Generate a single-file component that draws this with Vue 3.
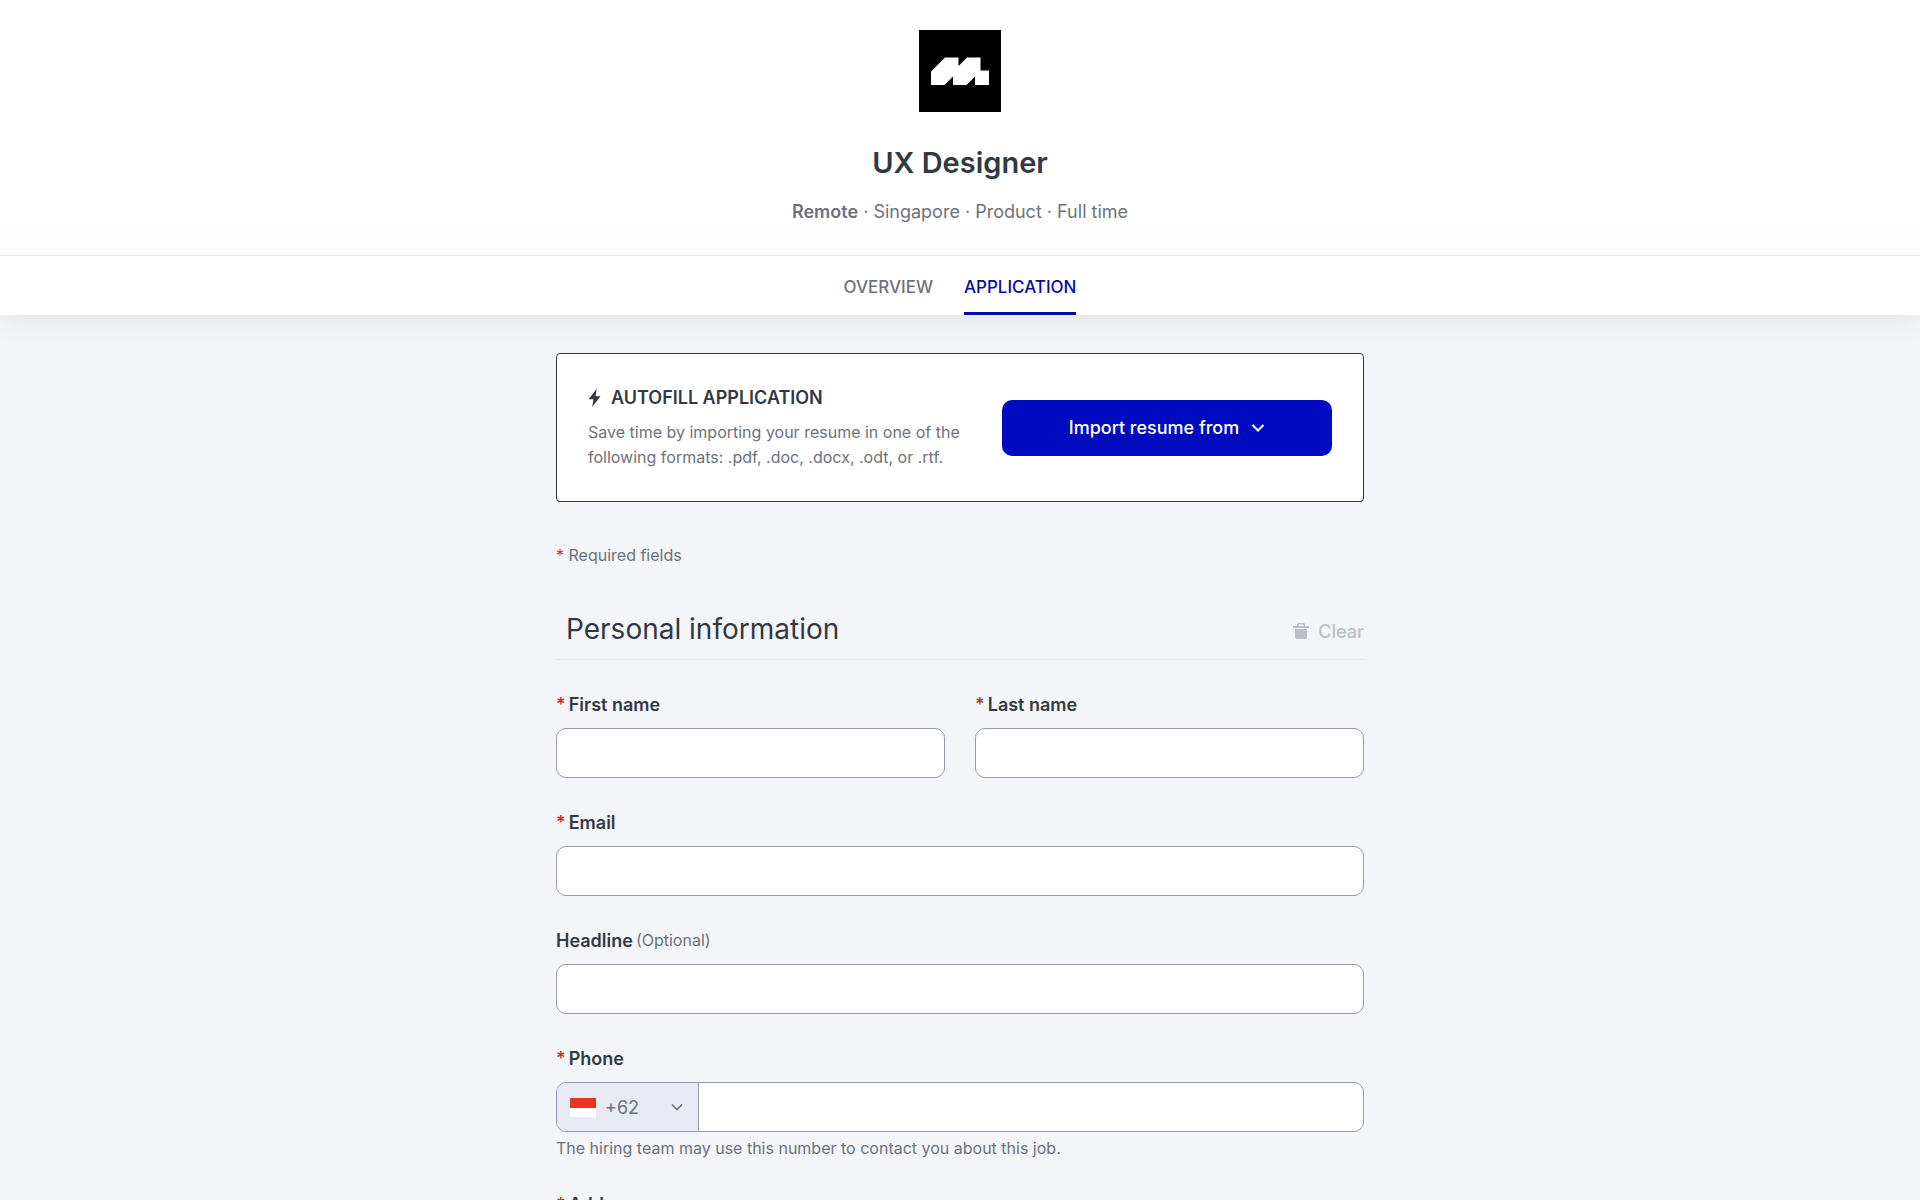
<template>
	<div class="page">
		<header class="header">
			<a class="header__logo" href="#" aria-label="Company page">
				<svg width="82" height="82" viewBox="0 0 82 82">
					<rect width="82" height="82" />
					<path fill="#fff" d="M12 41.500 26 27.500h13.500v8.500l8.500-8.500h13.500v13H70v14.500H56v-8.500L47.500 55H34v-8.500L25.500 55H12z" />
				</svg>
			</a>
			<h1 class="header__title">UX Designer</h1>
			<p class="header__meta"><strong>Remote</strong> · Singapore · Product · Full time</p>
		</header>

		<nav class="tabs">
			<a v-for="tab in tabs" :key="tab.key" class="tabs__item" :class="{ active: tab.key === activeTab }" :href="'#' + tab.key" @click.prevent="activeTab = tab.key">
				{{ tab.label }}
			</a>
		</nav>

		<main class="content">
			<section class="autofill">
				<div class="autofill__text">
					<h2 class="autofill__title">
						<svg width="14" height="18" viewBox="0 0 14 18">
							<path fill="currentColor" d="M8.600 0 .5 10.200h5L4.200 18 12.500 7.200H7.600z" />
						</svg>
						AUTOFILL APPLICATION
					</h2>
					<p>Save time by importing your resume in one of the following formats: .pdf, .doc, .docx, .odt, or .rtf.</p>
				</div>
				<button type="button" class="autofill__button">
					Import resume from
					<svg width="14" height="14" viewBox="0 0 14 14">
						<path fill="none" stroke="currentColor" stroke-width="2" d="M1.500 4 7 9.500 12.500 4" />
					</svg>
				</button>
			</section>

			<p class="required"><span class="star">*</span> Required fields</p>

			<form @submit.prevent>
				<div class="section-head">
					<h2 class="section-head__title">Personal information</h2>
					<button type="button" class="section-head__clear" :disabled="isEmpty" @click="clearForm">
						<svg width="16" height="16" viewBox="0 0 16 16">
							<path fill="currentColor" d="M4 3V1.500Q4 0 5.500 0h5Q12 0 12 1.500V3h4v2H0V3zm1.500 0h5V1.500h-5zM2 6h12v8q0 2-2 2H4q-2 0-2-2z" />
						</svg>
						<span>Clear</span>
					</button>
				</div>

				<div class="fields">
					<div v-for="field in fields" :key="field.key" class="field" :class="{ half: field.half }">
						<label class="field__label" :for="field.key">
							<span v-if="!field.optional" class="star">*</span>
							<span>{{ field.label }}</span>
							<span v-if="field.optional" class="field__optional">(Optional)</span>
						</label>
						<div v-if="field.key === 'phone'" class="phone">
							<div class="phone__country">
								<svg class="phone__flag" width="26" height="19" viewBox="0 0 26 19">
									<path fill="#fff" d="M0 0h26v19H0z" />
									<path fill="#e93323" d="M0 0h26v10H0z" />
								</svg>
								<select v-model="country" class="phone__select" aria-label="Country code">
									<option value="+62">+62</option>
									<option value="+65">+65</option>
								</select>
								<svg class="phone__arrow" width="14" height="14" viewBox="0 0 14 14">
									<path fill="none" stroke="currentColor" stroke-width="1.600" d="M2 4.500l5 5 5-5" />
								</svg>
							</div>
							<input :id="field.key" v-model="form.phone" class="phone__input" type="tel" />
						</div>
						<input v-else :id="field.key" v-model="form[field.key]" class="field__input" :type="field.type || 'text'" />
						<p v-if="field.hint" class="field__hint">{{ field.hint }}</p>
					</div>
				</div>
			</form>
		</main>
	</div>
</template>

<script setup>
	import { ref, reactive, computed } from "vue";

	const tabs = [
		{ key: "overview", label: "OVERVIEW" },
		{ key: "application", label: "APPLICATION" },
	];

	const fields = [
		{ key: "firstName", label: "First name", half: true },
		{ key: "lastName", label: "Last name", half: true },
		{ key: "email", label: "Email", type: "email" },
		{ key: "headline", label: "Headline", optional: true },
		{ key: "phone", label: "Phone", hint: "The hiring team may use this number to contact you about this job." },
		{ key: "address", label: "Address" },
	];

	const activeTab = ref("application");
	const country = ref("+62");
	const form = reactive({ firstName: "", lastName: "", email: "", headline: "", phone: "", address: "" });

	const isEmpty = computed(() => Object.values(form).every((v) => !v));

	function clearForm() {
		Object.keys(form).forEach((key) => (form[key] = ""));
	}
</script>

<style>
	body {
		margin: 0;
		background: #f3f5f9;
	}
</style>

<style scoped>
	.page {
		font-family: Inter, "Liberation Sans", sans-serif;
		font-size: 16px;
		line-height: 25px;
		color: #333942;
	}

	.page * {
		box-sizing: border-box;
	}

	h1,
	h2,
	p {
		margin: 0;
	}

	button,
	input,
	select {
		font: inherit;
	}

	.header {
		position: relative;
		z-index: 1;
		display: flex;
		flex-direction: column;
		align-items: center;
		padding: 30px 24px 31px;
		background: linear-gradient(#fff 85%, #fcfcfc);
		border-bottom: 1px solid #e6e8e8;
	}

	.header__logo,
	.header__logo svg {
		display: block;
	}

	.header__title {
		margin-top: 31px;
		font-size: 29px;
		line-height: 40px;
		font-weight: 600;
	}

	.header__meta {
		margin-top: 16px;
		font-size: 18px;
		color: #6d727c;
	}

	.header__meta strong {
		font-weight: 600;
	}

	.tabs {
		display: flex;
		justify-content: center;
		gap: 31px;
		height: 59px;
		background: #fff;
		box-shadow: 0 4px 30px rgba(0, 0, 0, 0.08);
	}

	.tabs__item {
		padding-top: 19px;
		border-bottom: 3px solid transparent;
		font-size: 17px;
		font-weight: 500;
		color: #6d727c;
		text-decoration: none;
	}

	.tabs__item.active {
		color: #0709a8;
		border-color: #0709a8;
	}

	.content {
		max-width: 808px;
		margin: 0 auto;
		padding: 38px 0 48px;
	}

	.autofill {
		display: flex;
		align-items: center;
		justify-content: space-between;
		gap: 24px;
		padding: 31px;
		background: #fff;
		border: 1px solid #333942;
		border-radius: 4px;
	}

	.autofill__text {
		max-width: 390px;
		color: #6d727c;
	}

	.autofill__title {
		display: flex;
		align-items: center;
		gap: 9px;
		margin-bottom: 10px;
		font-size: 18px;
		font-weight: 600;
		color: #333942;
	}

	.autofill__button {
		display: flex;
		align-items: center;
		justify-content: center;
		gap: 12px;
		width: 330px;
		height: 56px;
		border: none;
		border-radius: 10px;
		background: #000bbf;
		font-size: 18px;
		font-weight: 500;
		color: #fff;
		cursor: pointer;
	}

	.star {
		color: #b93a26;
	}

	.required {
		margin-top: 41px;
		color: #6d727c;
	}

	.section-head {
		display: flex;
		align-items: baseline;
		justify-content: space-between;
		margin-top: 41px;
		padding: 0 0 10px 10px;
		border-bottom: 1px solid #e6e9ee;
	}

	.section-head__title {
		font-size: 28px;
		line-height: 40px;
		font-weight: 400;
	}

	.section-head__clear {
		display: flex;
		align-items: center;
		gap: 9px;
		padding: 0;
		border: none;
		background: none;
		font-size: 18px;
		font-weight: 500;
		color: #bcbfc5;
	}

	.fields {
		display: grid;
		grid-template-columns: 1fr 1fr;
		gap: 32px 30px;
		margin-top: 32px;
	}

	.field {
		grid-column: 1 / -1;
	}

	.field.half {
		grid-column: auto;
	}

	.field__label {
		display: flex;
		gap: 3px;
		margin-bottom: 11px;
		font-size: 18px;
		font-weight: 600;
	}

	.field__optional {
		font-size: 16px;
		font-weight: 400;
		color: #6d727c;
	}

	.field__input,
	.phone {
		display: flex;
		width: 100%;
		height: 50px;
		border: 1px solid #969aaa;
		border-radius: 10px;
		background: #fff;
		overflow: hidden;
	}

	.field__input {
		padding: 0 12px;
	}

	.phone__country {
		position: relative;
		display: flex;
		align-items: center;
		width: 142px;
		padding-left: 13px;
		border-right: 1px solid #969aaa;
		background: #e7eaf3;
		color: #6d727c;
	}

	.phone__flag {
		flex: none;
	}

	.phone__select {
		flex: 1;
		height: 100%;
		padding: 0 0 0 9px;
		border: none;
		background: none;
		appearance: none;
		font-size: 18px;
		color: inherit;
	}

	.phone__arrow {
		position: absolute;
		right: 14px;
		pointer-events: none;
	}

	.phone__input {
		flex: 1;
		padding: 0 12px;
		border: none;
		background: none;
	}

	.field__hint {
		margin-top: 5px;
		line-height: 23px;
		color: #6d727c;
	}
</style>
